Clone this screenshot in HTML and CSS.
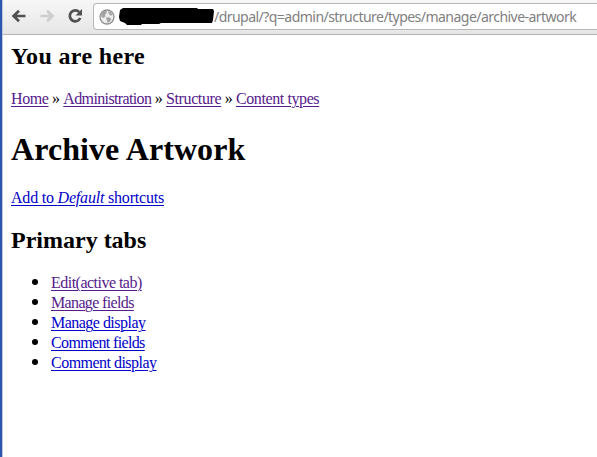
FILE: index.html
```html
<!DOCTYPE html>
<html lang="en">
<head>
<meta charset="utf-8">
<title>Archive Artwork</title>
<link rel="stylesheet" href="styles.css">
</head>
<body>
<div class="window">
  <header class="toolbar">
    <svg class="icon back" viewBox="0 0 16 16"><path d="M14.5 8H3M8 2.8 2.6 8 8 13.2"/></svg>
    <svg class="icon forward" viewBox="0 0 16 16"><path d="M1.5 8H13M8 2.8 13.4 8 8 13.2"/></svg>
    <svg class="icon reload" viewBox="0 0 16 16"><path d="M12.2 4.2A5.4 5.4 0 1 0 13.2 10"/><path class="head" d="M15 1v6.5H8.5z"/></svg>
    <div class="address">
      <svg class="globe" viewBox="0 0 16 16"><circle cx="8" cy="8" r="7" /><path d="M2.5 4.5 5 2l3 .3-.5 2L6 5.5l.5 1.7L4.5 9 2 7.5zM9 2.2l3 1.2 1.7 2.8-2.2.3L9.8 5zM7 8.5l3-.2 2.4 1.6-1.2 2.4L8.8 14l-1-2.8z"/></svg>
      <svg class="redaction" viewBox="0 0 98 18"><path d="M1 2 4 0H78L79 1H94L95 3 94 12 93 15H42L40 16H23L22 17H8L6 15 1 13 0 9z"/></svg>
      <span class="url">/drupal/?q=admin/structure/types/manage/archive-artwork</span>
    </div>
  </header>
  <main class="page">
    <h2 class="here">You are here</h2>
    <nav class="crumbs"><a class="visited" href="#">Home</a> » <a class="visited tight" href="#">Administration</a> » <a class="visited" href="#">Structure</a> » <a class="visited" href="#">Content types</a></nav>
    <h1>Archive Artwork</h1>
    <p class="shortcut"><a href="#">Add to <em>Default</em> shortcuts</a></p>
    <h2 class="primary">Primary tabs</h2>
    <ul>
      <li><a class="visited" href="#">Edit(active tab)</a></li>
      <li><a class="visited tight" href="#">Manage fields</a></li>
      <li><a href="#">Manage display</a></li>
      <li><a class="tight" href="#">Comment fields</a></li>
      <li><a href="#">Comment display</a></li>
    </ul>
  </main>
</div>
</body>
</html>
```
FILE: styles.css
```css
* { box-sizing: border-box; }
body { margin: 0; overflow: hidden; background: #fff; }
.window {
  height: 457px;
  border-left: 2px solid #2d57ac;
  box-shadow: inset 1px 0 #b9c6df;
}
.toolbar {
  display: flex;
  align-items: center;
  height: 35px;
  margin-left: 1px;
  padding: 0 0 2px 8px;
  background: linear-gradient(#f7f7f7, #e6e6e6);
  border-bottom: 1px solid #b3b3b3;
}
.icon {
  flex: none;
  width: 16px;
  height: 16px;
  margin-right: 12px;
  fill: none;
  stroke: #505050;
  stroke-width: 2.7;
}
.forward { stroke: #cdcdcd; }
.reload { margin-right: 10px; }
.head { fill: #505050; stroke: none; }
.address {
  display: flex;
  align-items: center;
  flex: 1;
  min-width: 0;
  height: 27px;
  margin-top: 1px;
  padding-left: 5px;
  background: #fff;
  border: 1px solid #b8b8b8;
  border-right: 0;
  border-radius: 4px 0 0 4px;
}
.globe { flex: none; width: 16px; height: 16px; fill: #a3a3a3; }
.globe circle { fill: #eee; stroke: #909090; stroke-width: 1.3; }
.redaction { flex: none; width: 98px; height: 18px; margin-left: 4px; }
.url {
  margin: -1px 0 0 -3px;
  color: #808080;
  font: 15px/20px "Noto Sans", sans-serif;
  letter-spacing: -0.6px;
  white-space: nowrap;
  transform: scaleX(0.937);
  transform-origin: left;
}
.page {
  padding: 0 9px;
  color: #000;
  font: 16px/20px "Liberation Serif", serif;
}
h1, h2, p, ul { margin: 0; }
h2 { font-size: 24px; line-height: 28px; }
h1 { margin-top: 21px; font-size: 32px; line-height: 38px; letter-spacing: 0.08px; }
.here { margin-top: 7px; letter-spacing: 0.36px; }
.crumbs { margin-top: 19px; letter-spacing: -0.4px; }
.shortcut { margin-top: 20px; letter-spacing: -0.2px; }
.primary { margin-top: 18px; }
ul { margin-top: 17px; padding-left: 40px; letter-spacing: -0.52px; }
li { height: 20px; }
li::marker { font-size: 20px; }
a { color: #0000c8; text-decoration: underline; text-underline-offset: 2px; text-decoration-thickness: 1px; }
.visited { color: #551a8b; }
.tight { letter-spacing: -0.64px; }
```
